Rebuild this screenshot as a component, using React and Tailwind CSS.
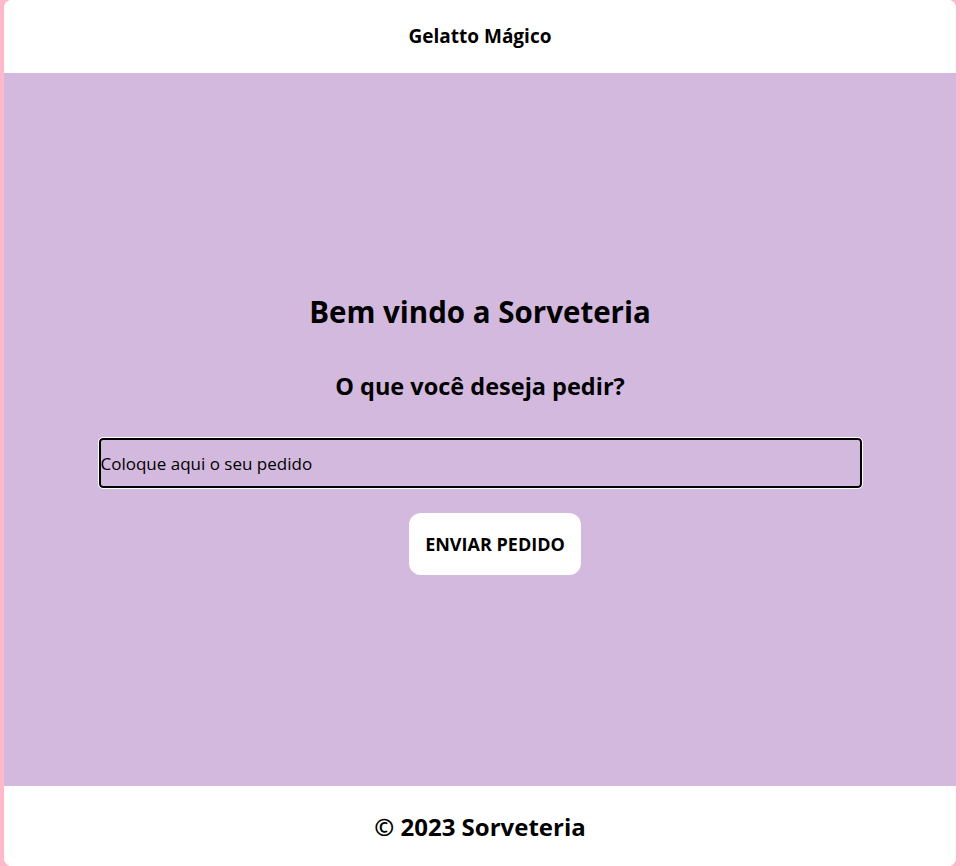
export default function App() {
  return (
    <div className="min-h-[866px] bg-[#ffb9cc] px-[4px]" style={{ fontFamily: '"Open Sans", "Noto Sans", sans-serif' }}>
      <div className="flex h-[866px] flex-col overflow-hidden rounded-[8px] bg-white">
        <header className="flex h-[73px] items-center justify-center bg-white">
          <h1 className="text-[19px] font-bold text-black">Gelatto Mágico</h1>
        </header>
        <main className="flex flex-1 flex-col items-center justify-center bg-[#d3b9de] pt-[10px]">
          <h2 className="text-[29.5px] font-bold leading-[36px] text-black">Bem vindo a Sorveteria</h2>
          <h3 className="mt-[41.5px] text-[23.5px] font-bold leading-[30px] text-black">O que você deseja pedir?</h3>
          <input
            className="mt-[37px] h-[50px] w-[763px] rounded-[4px] border-2 border-black bg-transparent text-[17px] text-black outline outline-1 outline-white placeholder:text-black"
            placeholder="Coloque aqui o seu pedido"
          />
          <button className="ml-[30px] mt-[25px] h-[62px] w-[172px] rounded-[12px] bg-white text-[18px] font-bold text-black">
            ENVIAR PEDIDO
          </button>
        </main>
        <footer className="flex h-[80px] items-center justify-center bg-white">
          <p className="mt-[2px] text-[24px] font-bold text-black">© 2023 Sorveteria</p>
        </footer>
      </div>
    </div>
  );
}
